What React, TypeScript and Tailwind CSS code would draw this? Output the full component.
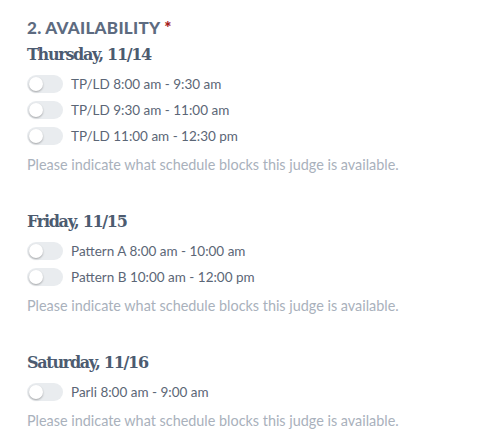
const days = [
  {
    title: "Thursday, 11/14",
    blocks: ["TP/LD 8:00 am - 9:30 am", "TP/LD 9:30 am - 11:00 am", "TP/LD 11:00 am - 12:30 pm"],
  },
  {
    title: "Friday, 11/15",
    blocks: ["Pattern A 8:00 am - 10:00 am", "Pattern B 10:00 am - 12:00 pm"],
  },
  {
    title: "Saturday, 11/16",
    blocks: ["Parli 8:00 am - 9:00 am"],
  },
];

const Toggle = () => (
  <span className="relative inline-block h-[18px] w-[36px] shrink-0 rounded-full bg-[#e9ecef]">
    <span className="absolute left-[2px] top-[2px] h-[14px] w-[14px] rounded-full bg-white shadow-[0_1px_2px_rgba(0,0,0,0.3)]" />
  </span>
);

export default function App() {
  return (
    <div className="bg-white px-[27px] pt-[17px] font-['Lato','Open_Sans',sans-serif]">
      <h2 className="text-[17px] font-black leading-[22px] tracking-[0.3px] text-[#5d6b80]">
        2. AVAILABILITY <span className="text-[#a51c1c]">*</span>
      </h2>
      {days.map((day, i) => (
        <div key={day.title} className={i === 0 ? "mt-[4px]" : "mt-[35px]"}>
          <h3 className="font-['DejaVu_Serif',serif] text-[16px] font-bold leading-[24px] tracking-[-1.3px] text-[#4c5b70]">
            {day.title}
          </h3>
          <div className="mt-[4px] flex flex-col">
            {day.blocks.map((b) => (
              <label key={b} className="flex h-[26px] items-center gap-[8px]">
                <Toggle />
                <span className="text-[13.5px] leading-[20px] text-[#5b6676]">{b}</span>
              </label>
            ))}
          </div>
          <p className="mt-[6px] text-[14.4px] leading-[20px] text-[#a9b1bc]">
            Please indicate what schedule blocks this judge is available.
          </p>
        </div>
      ))}
    </div>
  );
}
